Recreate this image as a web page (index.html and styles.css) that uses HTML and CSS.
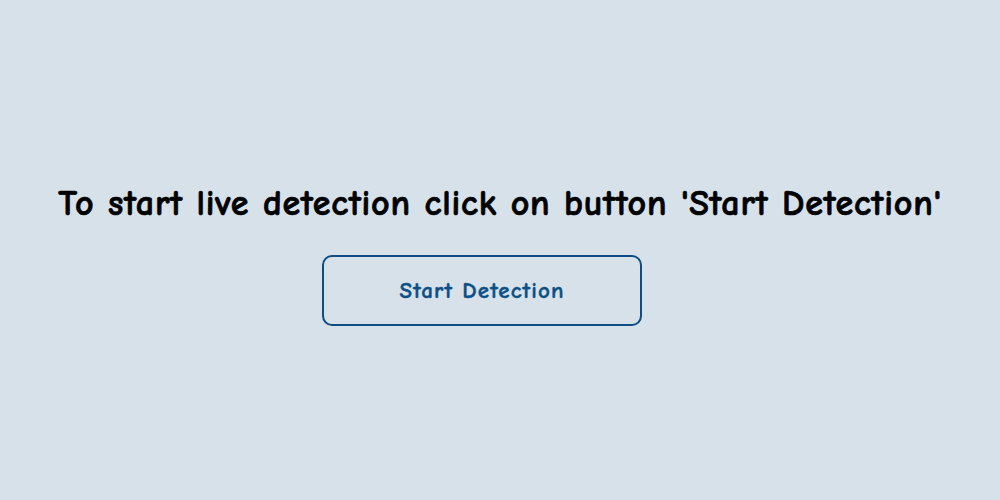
FILE: index.html
```html
<!DOCTYPE html>
<html lang="en">
<head>
<meta charset="utf-8">
<title>Live Detection</title>
<link rel="stylesheet" href="styles.css">
</head>
<body>
<main class="page">
  <h1 class="title">To start live detection click on button 'Start Detection'</h1>
  <div class="actions">
    <button class="start-btn" type="button">Start Detection</button>
  </div>
</main>
</body>
</html>
```
FILE: styles.css
```css
html, body {
  margin: 0;
  padding: 0;
  height: 100%;
}
body {
  background: #d6e1ea;
  font-family: "Comic Sans MS", "Comic Neue", "Open Sans", sans-serif;
}
.page {
  height: 500px;
  display: flex;
  flex-direction: column;
  align-items: center;
  padding-top: 180px;
  box-sizing: border-box;
}
.title {
  margin: 0;
  font-size: 36px;
  font-weight: 700;
  color: #000;
  line-height: 48px;
  letter-spacing: 0.8px;
  text-align: center;
  -webkit-text-stroke: 0.7px #000;
}
.actions {
  margin-top: 27px;
  width: 1000px;
  display: flex;
  justify-content: center;
  padding-right: 36px;
  box-sizing: border-box;
}
.start-btn {
  width: 320px;
  height: 71px;
  border: 2px solid #0f4c81;
  border-radius: 10px;
  background: transparent;
  color: #0b4f85;
  font-family: inherit;
  font-size: 23px;
  font-weight: 700;
  letter-spacing: 1.1px;
  -webkit-text-stroke: 0.4px #0b4f85;
  cursor: pointer;
}
```
